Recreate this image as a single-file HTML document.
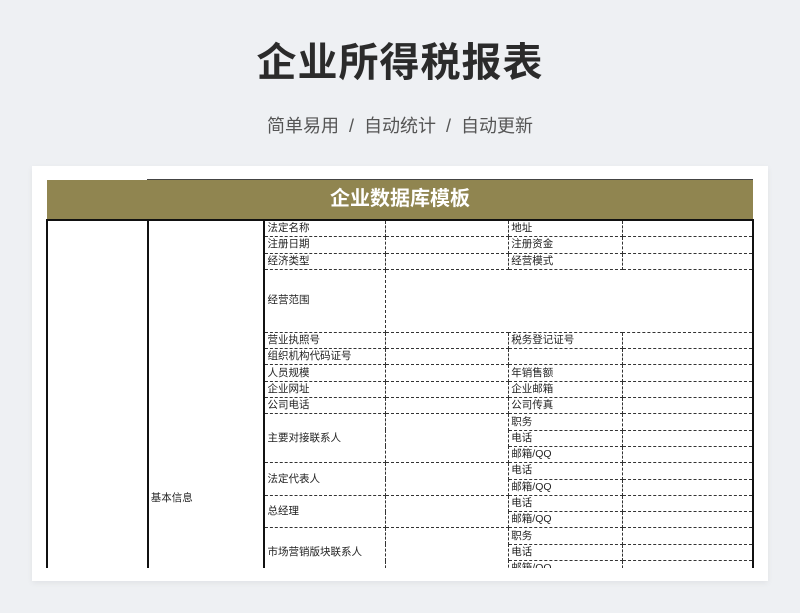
<!DOCTYPE html>
<html><head><meta charset="utf-8"><style>
body{margin:0;width:800px;height:613px;background:#eef0f3;font-family:"Liberation Sans","Noto Sans CJK SC",sans-serif;position:relative;overflow:hidden}
.t1{position:absolute;top:30px;left:0;width:800px;text-align:center;font-size:40px;font-weight:bold;color:#2b2b2b;letter-spacing:1px}
.t2{position:absolute;top:112px;left:0;width:800px;text-align:center;font-size:18px;color:#555}
.card{position:absolute;left:32px;top:166px;width:736px;height:415px;background:#fff;box-shadow:0 2px 6px rgba(0,0,0,.06)}
.band{position:absolute;left:47px;top:180px;width:706px;height:39px;background:#908550;color:#fff;font-size:20px;font-weight:bold;text-align:center;line-height:39px}
.bl{position:absolute;left:147px;top:179px;width:606px;height:1px;background:#444}
.wrap{position:absolute;left:46px;top:219px;width:708px;height:349px;overflow:hidden}
table{border-collapse:collapse;table-layout:fixed;font-size:10.5px;color:#222}
td{border:1px dashed #333;padding:0 0 0 2px;height:15.3px;line-height:15px;white-space:nowrap;overflow:hidden}
td.s{border:2px solid #111}
tr:first-child td{border-top:2px solid #111}
td.r{border-right:2px solid #111}
</style></head><body>
<div class="t1">企业所得税报表</div>
<div class="t2">简单易用 &nbsp;/&nbsp; 自动统计 &nbsp;/&nbsp; 自动更新</div>
<div class="card"></div>
<div class="band">企业数据库模板</div>
<div class="bl"></div>
<div class="wrap">
<table>
<colgroup><col style="width:101px"><col style="width:117px"><col style="width:121px"><col style="width:124px"><col style="width:114px"><col style="width:131px"></colgroup>
<tr><td class="s" rowspan="30" style="vertical-align:bottom;padding-bottom:10px;text-align:center;font-size:13px;font-weight:bold">企业概况</td><td class="s" rowspan="30" style="vertical-align:top;padding-top:270px">基本信息</td><td>法定名称</td><td></td><td>地址</td><td class="r"></td></tr>
<tr><td>注册日期</td><td></td><td>注册资金</td><td class="r"></td></tr>
<tr><td>经济类型</td><td></td><td>经营模式</td><td class="r"></td></tr>
<tr><td style="height:62px">经营范围</td><td colspan="3" class="r"></td></tr>
<tr><td>营业执照号</td><td></td><td>税务登记证号</td><td class="r"></td></tr>
<tr><td>组织机构代码证号</td><td></td><td></td><td class="r"></td></tr>
<tr><td>人员规模</td><td></td><td>年销售额</td><td class="r"></td></tr>
<tr><td>企业网址</td><td></td><td>企业邮箱</td><td class="r"></td></tr>
<tr><td>公司电话</td><td></td><td>公司传真</td><td class="r"></td></tr>
<tr><td rowspan="3">主要对接联系人</td><td rowspan="3"></td><td>职务</td><td class="r"></td></tr>
<tr><td>电话</td><td class="r"></td></tr>
<tr><td>邮箱/QQ</td><td class="r"></td></tr>
<tr><td rowspan="2">法定代表人</td><td rowspan="2"></td><td>电话</td><td class="r"></td></tr>
<tr><td>邮箱/QQ</td><td class="r"></td></tr>
<tr><td rowspan="2">总经理</td><td rowspan="2"></td><td>电话</td><td class="r"></td></tr>
<tr><td>邮箱/QQ</td><td class="r"></td></tr>
<tr><td rowspan="3">市场营销版块联系人</td><td rowspan="3"></td><td>职务</td><td class="r"></td></tr>
<tr><td>电话</td><td class="r"></td></tr>
<tr><td>邮箱/QQ</td><td class="r"></td></tr>
<tr><td></td><td></td><td></td><td class="r"></td></tr>
<tr><td></td><td></td><td></td><td class="r"></td></tr>
</table>
</div>
</body></html>
